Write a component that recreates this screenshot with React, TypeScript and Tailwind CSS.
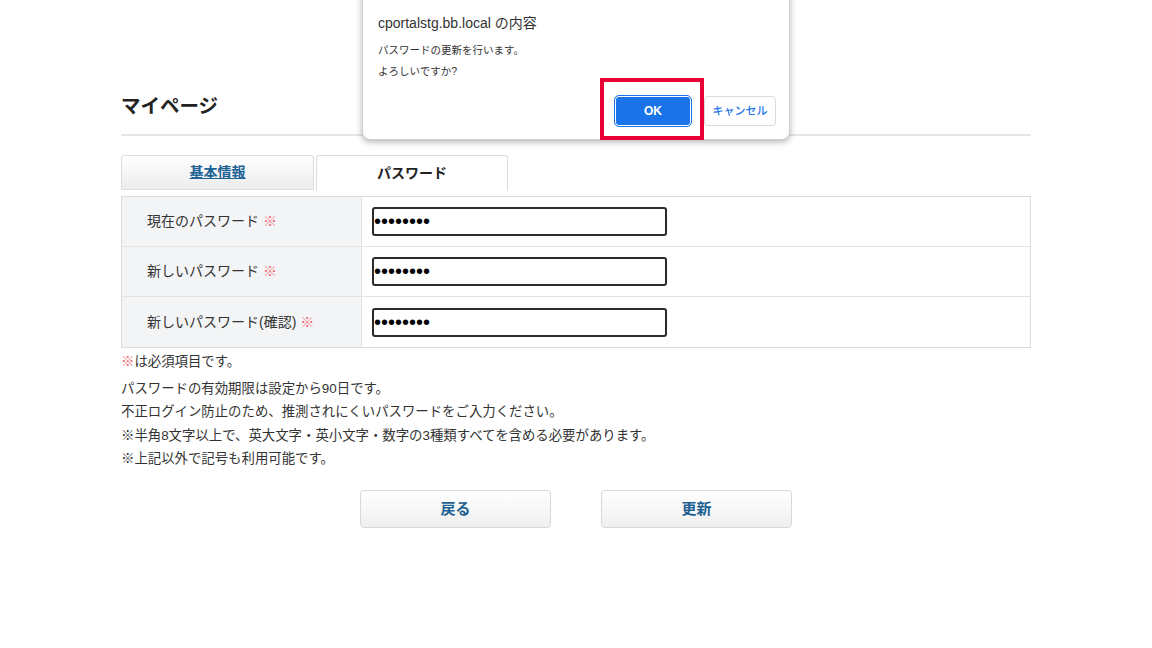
import React from "react";

const font = { fontFamily: '"Liberation Sans", "Noto Sans CJK JP", sans-serif' };

function Req() {
  return <span className="ml-1 text-[#f0646e]">※</span>;
}

function Row({ label, last }: { label: React.ReactNode; last?: boolean }) {
  return (
    <div className={`flex h-[50px] ${last ? "" : "border-b border-[#e3e3e3]"}`}>
      <div className="flex w-[240px] items-center border-r border-[#e3e3e3] bg-[#f3f4f6] pl-[25px] text-[14px] text-[#333]">
        {label}
      </div>
      <div className="flex flex-1 items-center pl-[10px]">
        <input
          type="password"
          defaultValue="password"
          className="h-[29px] w-[295px] rounded-[3px] border-2 border-[#2b2b2b] bg-white px-0 text-[20px] leading-none text-black outline-none"
        />
      </div>
    </div>
  );
}

export default function App() {
  return (
    <div className="relative min-h-screen w-full overflow-hidden bg-white" style={font}>
      <div className="ml-[121px] w-[910px]">
        <h1 className="pt-[92px] pb-[14px] text-[19.5px] font-bold leading-[28px] text-[#222]">マイページ</h1>
        <div className="h-[2px] bg-[#e6e6e6]" />

        <div className="mt-[19px] flex gap-[2px]">
          <div className="flex h-[35px] w-[193px] items-center justify-center rounded-t-[3px] border border-[#dcdcdc] bg-gradient-to-b from-white to-[#ececec] text-[14px] font-bold text-[#1d6295] underline">
            基本情報
          </div>
          <div className="flex h-[36px] w-[192px] items-center justify-center rounded-t-[3px] border border-b-0 border-[#dcdcdc] bg-white text-[14px] font-bold text-[#222]">
            パスワード
          </div>
        </div>

        <div className="mt-[5px] border border-[#dcdcdc]">
          <Row label={<>現在のパスワード<Req /></>} />
          <Row label={<>新しいパスワード<Req /></>} />
          <Row label={<>新しいパスワード(確認)<Req /></>} last />
        </div>

        <p className="mt-[4px] text-[13.4px] leading-[20px] text-[#333]">
          <span className="text-[#f0646e]">※</span>は必須項目です。
        </p>
        <div className="mt-[5px] text-[13.4px] leading-[23.3px] text-[#333]">
          <p>パスワードの有効期限は設定から90日です。</p>
          <p>不正ログイン防止のため、推測されにくいパスワードをご入力ください。</p>
          <p>※半角8文字以上で、英大文字・英小文字・数字の3種類すべてを含める必要があります。</p>
          <p>※上記以外で記号も利用可能です。</p>
        </div>
      </div>

      <div className="mt-[20px] flex justify-center gap-[50px]">
        <button className="h-[38px] w-[191px] rounded-[4px] border border-[#d8d8d8] bg-gradient-to-b from-white to-[#eeeff0] text-[15px] font-bold text-[#1d5f92]">
          戻る
        </button>
        <button className="h-[38px] w-[191px] rounded-[4px] border border-[#d8d8d8] bg-gradient-to-b from-white to-[#eeeff0] text-[15px] font-bold text-[#1d5f92]">
          更新
        </button>
      </div>

      {/* browser confirm dialog */}
      <div className="absolute left-[362px] top-[-10px] h-[150px] w-[428px] rounded-b-[8px] border border-[#d0d0d0] bg-white shadow-[0_2px_6px_rgba(0,0,0,0.3)]">
        <div className="pl-[15px] pt-[22px] text-[14px] leading-[20px] text-[#333]">cportalstg.bb.local の内容</div>
        <div className="pl-[15px] pt-[7px] text-[10.5px] leading-[21px] text-[#333]">
          <p>パスワードの更新を行います。</p>
          <p>よろしいですか?</p>
        </div>
        <div className="absolute left-[252px] top-[105px] flex h-[30px] w-[76px] items-center justify-center rounded-[4px] bg-[#1a73e8] ring-1 ring-inset ring-white outline outline-1 outline-[#1a73e8] text-[12px] font-bold text-white">
          OK
        </div>
        <div className="absolute left-[341px] top-[105px] flex h-[30px] w-[72px] items-center justify-center rounded-[4px] border border-[#dadce0] bg-white text-[11px] font-medium text-[#1a73e8]">
          キャンセル
        </div>
      </div>

      {/* highlight annotation */}
      <div className="absolute left-[600px] top-[78px] h-[62px] w-[104px] border-[4px] border-[#ea0037]" />
    </div>
  );
}
